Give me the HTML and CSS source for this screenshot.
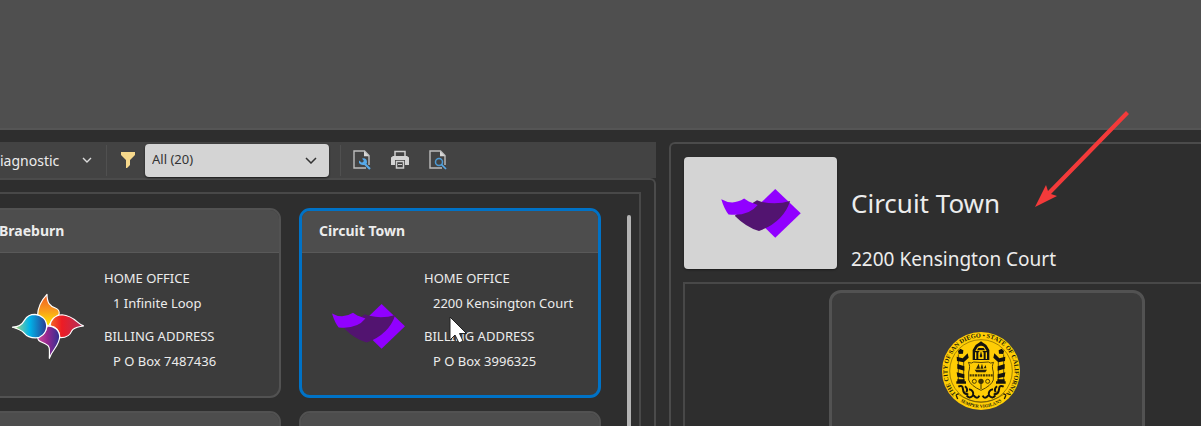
FILE: index.html
```html
<!DOCTYPE html>
<html lang="en">
<head>
<meta charset="utf-8">
<title>Customers</title>
<link rel="stylesheet" href="styles.css">
</head>
<body>
<svg class="defs" aria-hidden="true">
  <defs>
    <linearGradient id="g-orange" x1="0" y1="0" x2="0" y2="1"><stop offset="0" stop-color="#ef5a24"/><stop offset=".5" stop-color="#f99a1c"/><stop offset="1" stop-color="#ffee00"/></linearGradient>
    <linearGradient id="g-blue"><stop offset="0" stop-color="#d4dc4a"/><stop offset=".25" stop-color="#5cc5b0"/><stop offset=".5" stop-color="#00b4ea"/><stop offset="1" stop-color="#2b3990"/></linearGradient>
    <linearGradient id="g-red"><stop offset="0" stop-color="#f36a24"/><stop offset=".35" stop-color="#ed1c24"/><stop offset="1" stop-color="#b03060"/></linearGradient>
    <linearGradient id="g-purple"><stop offset="0" stop-color="#d0489a"/><stop offset=".45" stop-color="#92278f"/><stop offset="1" stop-color="#2e3192"/></linearGradient>
    <symbol id="flag" viewBox="183 205 240 148">
      <path fill="#9100ff" d="M346 205 423 278 346 352 270 278Z"/>
      <path fill="#521470" d="M225 284 L280 246 291 239 Q300 243 306 244 Q350 254 391 241 Q371 304 297 332 Q258 320 225 287Z"/>
      <path fill="#9100ff" d="M183 236 Q218 256 252 234 L266 243 Q280 248 293 253 Q264 289 205 282 Q192 266 183 236Z"/>
    </symbol>
    <symbol id="pinwheel" viewBox="20 22 220 200">
      <g stroke="#fff" stroke-width="3.5" stroke-linejoin="round">
        <path fill="url(#g-orange)" d="M127 26C112 42 100 60 99 88C110 98 120 110 131 122C140 104 150 96 163 86C165 75 162 71 152 67C135 60 127 52 127 26Z"/>
        <path fill="url(#g-red)" d="M236 120C218 116 210 90 172 87C150 88 137 103 136 120C153 122 164 134 165 155C184 156 196 148 201 135C208 124 220 124 236 120Z"/>
        <path fill="url(#g-purple)" d="M134 217C134 196 138 180 124 175C106 166 99 166 99 152C114 150 124 138 128 120C149 120 164 132 165 152C164 180 143 190 134 217Z"/>
        <path fill="url(#g-blue)" d="M24 124C42 124 52 118 60 103C68 90 78 86 91 86C112 88 126 102 126 121C125 142 110 155 93 156C77 156 66 151 58 141C50 132 36 128 24 124Z"/>
      </g>
    </symbol>
    <symbol id="page" viewBox="0 0 18 20">
      <path fill="none" stroke="#bdbdbd" stroke-width="1.4" d="M16 15V5.5L11.5 1H1V18H13"/>
      <path fill="#d6d6d6" d="M11 1 16.3 6.3H11Z"/>
    </symbol>
  </defs>
</svg>

<div class="ribbon"></div>
<main class="workspace">
  <section class="browser">
    <div class="toolbar">
      <button class="view-button" type="button">iagnostic
        <svg width="10" height="6" viewBox="0 0 10 6"><path fill="none" stroke="#dcdcdc" stroke-width="1.4" d="M1 1 5 5 9 1"/></svg>
      </button>
      <label class="filter">
        <svg width="14" height="16" viewBox="0 0 14 16" role="img" aria-label="Filter"><path fill="#f7d98c" d="M0 0H14V3L9 8V13L6 16H5V8L0 3Z"/></svg>
        <span class="select-wrap">
          <select class="select"><option>All (20)</option></select>
          <svg class="select-arrow" width="12" height="7" viewBox="0 0 12 7"><path fill="none" stroke="#333" stroke-width="1.5" d="M1 1 6 6 11 1"/></svg>
        </span>
      </label>
      <div class="tools">
        <button class="tool" type="button" aria-label="Page setup">
          <svg width="18" height="20" viewBox="0 0 18 20"><use href="#page"/><path fill="none" stroke="#57a9e8" stroke-width="2.2" d="M11 13 17 19"/><path fill="#57a9e8" d="M9 8.5 11 8.2Q14 8.5 14 12.5L13 14.5Q8 16 6 13V10.5L9 12.8 11 11Z"/></svg>
        </button>
        <button class="tool" type="button" aria-label="Print">
          <svg width="20" height="20" viewBox="0 0 20 20"><path fill="#d4d4d4" d="M1 7.500 3 6H17L19 7.500V15H1Z"/><path fill="none" stroke="#cfcfcf" stroke-width="1.5" d="M5 6V1.500H15V6"/><path fill="#434343" d="M5 10H15V19H5Z"/><path fill="none" stroke="#cfcfcf" stroke-width="1.5" d="M6.500 11.500H13.500V18H6.500Z"/><path stroke="#cfcfcf" d="M8 14.500H12"/></svg>
        </button>
        <button class="tool" type="button" aria-label="Print preview">
          <svg width="18" height="20" viewBox="0 0 18 20"><use href="#page"/><circle cx="10" cy="12" r="3.500" fill="none" stroke="#4d9bd5" stroke-width="1.5"/><path stroke="#57a9e8" stroke-width="1.7" d="M12.500 14.500 17 19"/></svg>
        </button>
      </div>
    </div>
    <div class="panel">
      <div class="list">
        <div class="cards">
          <article class="card">
            <h2 class="card-title">Braeburn</h2>
            <div class="card-body">
              <div class="card-logo"><svg width="74" height="67"><use href="#pinwheel"/></svg></div>
              <dl class="address">
                <dt>HOME OFFICE</dt><dd>1 Infinite Loop</dd>
                <dt>BILLING ADDRESS</dt><dd>P O Box 7487436</dd>
              </dl>
            </div>
          </article>
          <article class="card selected">
            <h2 class="card-title">Circuit Town</h2>
            <div class="card-body">
              <div class="card-logo"><svg width="73" height="45"><use href="#flag"/></svg></div>
              <dl class="address">
                <dt>HOME OFFICE</dt><dd>2200 Kensington Court</dd>
                <dt>BILLING ADDRESS</dt><dd>P O Box 3996325</dd>
              </dl>
            </div>
          </article>
          <article class="card"><div class="card-title"></div></article>
          <article class="card"><div class="card-title"></div></article>
        </div>
        <div class="scrollbar"></div>
      </div>
    </div>
  </section>

  <section class="detail">
    <header class="detail-head">
      <div class="detail-logo"><svg width="80" height="49"><use href="#flag"/></svg></div>
      <div class="detail-text">
        <h1 class="detail-name">Circuit Town</h1>
        <p class="detail-address">2200 Kensington Court</p>
      </div>
    </header>
    <div class="stores">
      <div class="store">
        <svg width="80" height="80" viewBox="0 0 240 240" role="img" aria-label="City seal">
          <defs>
            <path id="ring" d="M48 191A101 101 0 1 1 192 191"/>
            <path id="motto" d="M44 200A111 111 0 0 0 196 200"/>
          </defs>
          <circle cx="120" cy="120" r="117" fill="#ffcd05"/>
          <circle cx="120" cy="120" r="94" fill="none" stroke="#4a3c05" stroke-width="1.5"/>
          <text class="seal-ring"><textPath href="#ring" startOffset="50%" text-anchor="middle">THE CITY OF SAN DIEGO • STATE OF CALIFORNIA</textPath></text>
          <text class="seal-motto"><textPath href="#motto" startOffset="50%" text-anchor="middle">SEMPER VIGILANS</textPath></text>
          <path fill="none" stroke="#221d0a" stroke-width="4" d="M45 192 53 188M45 192 50 204M195 192 187 188M195 192 190 204"/>
          <path fill="none" stroke="#554407" stroke-width="2" d="M52 190Q120 236 188 190"/>
          <path fill="#14130f" d="M95 87V57L104 42 114 35 120 31 126 35 136 42 145 57V87Z"/>
          <path fill="#ffcd05" d="M103 60 110 48Q120 41 130 48L137 60ZM102 64H106V84H102ZM134 64H138V84H134Z"/>
          <path fill="#14130f" d="M108 58 112 51H128L132 58Z"/>
          <path fill="#ffcd05" d="M112 84V65Q120 52 128 65V84Z"/>
          <path fill="#14130f" d="M120 60 124 76 120 80 116 76Z"/>
          <g id="pillar" fill="#14130f">
            <path d="M51 60 58 53 67 58 66 68 53 69ZM47 77 65 82 80 67 83 80 68 94 48 90ZM49 99 70 106 70 119 49 113ZM47 124 70 130V142L49 137ZM49 145H71V151H75V158H46V151H49Z"/>
            <path fill="none" stroke="#14130f" stroke-width="2" d="M52 70V150M68 92V150"/>
            <path fill="none" stroke="#14130f" stroke-width="6" d="M52 167Q65 160 66 175T82 190M72 166Q82 174 76 184M84 175Q100 178 96 194Q85 205 77 193M98 193Q109 207 115 194"/>
          </g>
          <use href="#pillar" transform="matrix(-1 0 0 1 240 0)"/>
          <path fill="none" stroke="#594706" stroke-width="3" d="M82 94Q92 99 98 93Q120 96 142 93Q148 99 158 94Q151 104 157 123V147Q151 164 120 178Q89 164 83 147V123Q89 104 82 94Z"/>
          <path fill="#2a230a" d="M101 116H138L133 124H106ZM105 113 113 98 117 113ZM118 113 123 98 127 113ZM128 112 134 102 136 112Z"/>
          <path fill="none" stroke="#4a3c05" stroke-width="7" stroke-dasharray="6 2" d="M86 133H155"/>
          <circle cx="100" cy="151" r="6" fill="none" stroke="#4a3c05" stroke-width="3"/>
          <circle cx="140" cy="151" r="6" fill="none" stroke="#4a3c05" stroke-width="3"/>
          <circle cx="120" cy="151" r="8" fill="#3a3007"/>
          <path stroke="#3a3007" stroke-width="3" d="M120 156V174"/>
        </svg>
      </div>
    </div>
  </section>
</main>

<svg class="pointer" width="20" height="30" viewBox="0 0 20 30" aria-hidden="true"><path fill="#fff" stroke="#222" stroke-width="1" d="M1 1V24L6 19 10 27 14 25 10.500 17.500H17.500Z"/></svg>
<svg class="callout" width="98" height="98" viewBox="0 0 98 98" aria-hidden="true"><path fill="#f33a3a" d="M1 96 12 74 14 80 92 0 95 3 17 83 23 85Z"/></svg>
</body>
</html>
```

FILE: styles.css
```css
* { box-sizing: border-box; }

body {
  margin: 0;
  height: 100vh;
  overflow: hidden;
  display: flex;
  flex-direction: column;
  background: #2e2e2e;
  color: #ececec;
  font-family: "Noto Sans", "Open Sans", sans-serif;
  font-size: 13px;
}

h1, h2, p, dl, dd { margin: 0; }
svg { display: block; flex: none; }
button { border: 0; background: none; color: inherit; font: inherit; }

.defs { position: absolute; width: 0; height: 0; }

.ribbon {
  flex: none;
  height: 130px;
  background: #4f4f4f;
  border-bottom: 2px solid #555;
}

.workspace {
  flex: 1;
  min-height: 0;
  display: grid;
  grid-template-columns: minmax(0, 656fr) minmax(0, 532fr);
  gap: 13px;
  padding-top: 12px;
}

.browser { display: flex; flex-direction: column; min-height: 0; }

.toolbar {
  flex: none;
  display: flex;
  align-items: center;
  height: 36px;
  background: #434343;
}

.view-button {
  display: flex;
  align-items: center;
  justify-content: space-between;
  width: 107px;
  height: 31px;
  padding: 0 14px 0 0;
  border-right: 1px solid #505050;
  font-size: 14px;
}

.filter { display: flex; align-items: center; gap: 10px; padding: 0 11px 0 14px; }
.select-wrap { position: relative; }

.select {
  display: block;
  width: 184px;
  height: 33px;
  padding: 0 7px 2px;
  appearance: none;
  border: 0;
  border-radius: 4px;
  background: #d4d4d4;
  box-shadow: 0 1px 2px #1c1c1c;
  color: #333;
  font: inherit;
}

.select-arrow { position: absolute; right: 12px; top: 13px; pointer-events: none; }

.tools {
  display: flex;
  align-items: center;
  gap: 8px;
  height: 31px;
  padding-left: 6px;
  border-left: 1px solid #505050;
}

.tool { display: grid; place-items: center; width: 30px; height: 30px; padding: 0; }

.panel {
  flex: 1;
  min-height: 0;
  padding: 12px 13px 0 0;
  border-top: 2px solid #4b4b4b;
  border-right: 2px solid #4b4b4b;
  border-top-right-radius: 6px;
}

.list {
  display: flex;
  justify-content: flex-end;
  gap: 26px;
  height: 100%;
  padding: 14px 8px 0 0;
  overflow: hidden;
  border-top: 2px solid #484848;
  border-right: 2px solid #484848;
}

.cards {
  flex: none;
  display: grid;
  grid-template-columns: 302px 302px;
  align-content: start;
  gap: 13px 18px;
}

.card {
  min-height: 190px;
  overflow: hidden;
  border: 2px solid #525252;
  border-radius: 11px;
  background: #3c3c3c;
}

.card-title {
  height: 43px;
  padding: 0 18px;
  background: #4d4d4d;
  border-bottom: 1px solid #595959;
  font-size: 14px;
  font-weight: 700;
  line-height: 42px;
}

.card-body { display: flex; padding-top: 13px; }
.card-logo { display: grid; place-items: center; width: 134px; height: 120px; }
.address { line-height: 25px; }
.address dt { margin-left: -11px; }
.address dd { margin-left: -2px; }
.address dd + dt { margin-top: 8px; }

.selected { border: 3px solid #0072c6; }
.selected .card-title { height: 42px; padding: 0 17px; line-height: 40px; }
.selected .card-logo { width: 133px; }

.scrollbar {
  flex: none;
  width: 4px;
  margin-top: 7px;
  border-radius: 2px 2px 0 0;
  background: #b4b4b4;
}

.detail {
  display: flex;
  flex-direction: column;
  min-height: 0;
  padding: 13px 0 0 12px;
  border-top: 2px solid #4b4b4b;
  border-left: 2px solid #4b4b4b;
  border-top-left-radius: 6px;
}

.detail-head { display: flex; gap: 14px; padding: 0 0 13px 1px; }

.detail-logo {
  flex: none;
  display: grid;
  place-items: center;
  width: 153px;
  height: 112px;
  border-radius: 4px;
  background: #d4d4d4;
  box-shadow: 0 1px 2px #1c1c1c;
}

.detail-text { padding-top: 26px; }
.detail-name { font-size: 26px; font-weight: 400; line-height: 40px; }
.detail-address { margin-top: 22px; font-size: 19px; line-height: 28px; height: 24px; }

.stores {
  flex: 1;
  min-height: 0;
  padding: 6px 0 0 144px;
  overflow: hidden;
  border-top: 2px solid #484848;
  border-left: 2px solid #484848;
}

.store {
  display: flex;
  justify-content: center;
  width: 316px;
  height: 240px;
  padding: 38px 12px 0 0;
  border: 3px solid #525252;
  border-radius: 12px;
  background: #3c3c3c;
}

.seal-ring { fill: #221d0a; font: 700 19px "Liberation Serif", serif; }
.seal-motto { fill: #221d0a; font: 700 14px "Liberation Serif", serif; }

.pointer { position: absolute; left: 449px; top: 316px; }
.callout { position: absolute; left: 1034px; top: 111px; }
```
